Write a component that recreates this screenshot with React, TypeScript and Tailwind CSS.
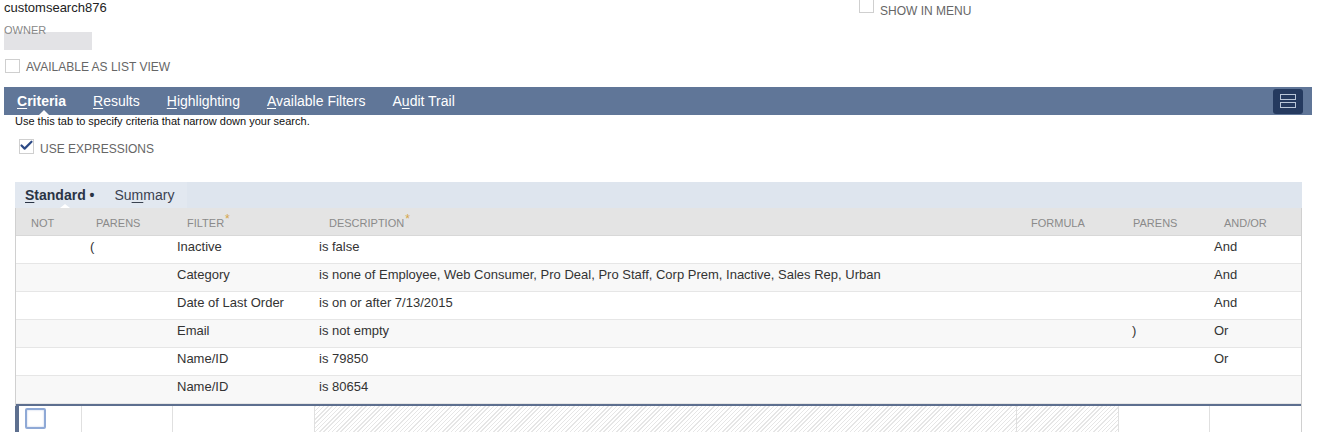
import { Check } from "lucide-react";

const cols = "grid grid-cols-[65px_91px_142px_702px_102px_91px_94px]";

const rows = [
  { parens: "(", filter: "Inactive", desc: "is false", close: "", andor: "And" },
  {
    parens: "",
    filter: "Category",
    desc: "is none of Employee, Web Consumer, Pro Deal, Pro Staff, Corp Prem, Inactive, Sales Rep, Urban",
    close: "",
    andor: "And",
  },
  { parens: "", filter: "Date of Last Order", desc: "is on or after 7/13/2015", close: "", andor: "And" },
  { parens: "", filter: "Email", desc: "is not empty", close: ")", andor: "Or" },
  { parens: "", filter: "Name/ID", desc: "is 79850", close: "", andor: "Or" },
  { parens: "", filter: "Name/ID", desc: "is 80654", close: "", andor: "" },
];

function Box({ className = "" }: { className?: string }) {
  return <span className={`block w-[15px] h-[14px] border border-[#cfcfcf] bg-white ${className}`} />;
}

function Tab({ k, rest, bold }: { k: string; rest: string; bold?: boolean }) {
  return (
    <span className={`text-[14px] text-white ${bold ? "font-bold" : ""}`}>
      <span className="underline underline-offset-2">{k}</span>
      {rest}
    </span>
  );
}

function Star() {
  return <span className="text-[#d5a64a] text-[12px] leading-[12px] relative -top-[4px] ml-[1px]">*</span>;
}

export default function App() {
  const hatch =
    "bg-[repeating-linear-gradient(135deg,#e6e6e6_0px,#e6e6e6_1px,#ffffff_1px,#ffffff_3px)]";

  return (
    <div className="w-[1320px] h-[432px] overflow-hidden bg-white font-['Liberation_Sans',Arial,sans-serif] text-[#333]">
      {/* top fields */}
      <div className="flex">
        <div className="w-[859px] pl-1">
          <div className="text-[13px] leading-[16px] text-[#222]">customsearch876</div>
          <div className="mt-[8px] text-[11px] leading-[12px] text-[#888]">OWNER</div>
          <div className="-mt-[4px] w-[88px] h-[18px] bg-[#e3e3e6]" />
          <div className="mt-[9px] flex items-end gap-[6px] pl-[1px]">
            <Box />
            <span className="text-[12px] leading-[12px] text-[#666]">AVAILABLE AS LIST VIEW</span>
          </div>
        </div>
        <div className="flex items-start gap-[6px]">
          <Box className="-mt-[1px]" />
          <span className="text-[12px] leading-[13px] mt-[5px] text-[#666]">SHOW IN MENU</span>
        </div>
      </div>

      {/* main tabs */}
      <div className="relative mt-[14px] ml-1 w-[1308px] h-[28px] bg-[#607698] flex items-center pl-[13px] pr-[9px]">
        <div className="flex gap-[27px]">
          <Tab k="C" rest="riteria" bold />
          <Tab k="R" rest="esults" />
          <Tab k="H" rest="ighlighting" />
          <Tab k="A" rest="vailable Filters" />
          <span className="text-[14px] text-white">
            A<span className="underline underline-offset-2">u</span>dit Trail
          </span>
        </div>
        <div className="ml-auto w-[30px] h-[25px] rounded-[3px] bg-[#253a5f] flex flex-col items-center justify-center gap-[2px]">
          <span className="block w-[16px] h-[6px] border border-[#b9c6d8]" />
          <span className="block w-[16px] h-[6px] border border-[#b9c6d8]" />
        </div>
        <span className="absolute left-[35px] bottom-0 w-0 h-0 border-l-[5px] border-r-[5px] border-b-[5px] border-l-transparent border-r-transparent border-b-white" />
      </div>

      <div className="pl-[15px] text-[11px] leading-[13px] text-[#111]">
        Use this tab to specify criteria that narrow down your search.
      </div>
      <div className="mt-[11px] pl-[19px] flex items-end gap-[6px]">
        <span className="relative block w-[15px] h-[15px] border border-[#cfcfcf] bg-white">
          <Check className="absolute -left-[1px] -top-[2px] w-[15px] h-[15px] text-[#2d4a86]" strokeWidth={3.5} />
        </span>
        <span className="text-[12px] leading-[12px] text-[#666] translate-y-[1px]">USE EXPRESSIONS</span>
      </div>

      {/* subtabs */}
      <div className="relative mt-[28px] ml-[15px] w-[1287px] h-[26px] bg-[#dee5ee] flex items-center">
        <div className="h-full flex items-center pl-[10px] pr-[13px] bg-[#e2e8f0] gap-[20px]">
          <span className="text-[14px] font-bold text-[#2a3445]">
            <span className="underline underline-offset-2">S</span>tandard •
          </span>
          <span className="text-[14px] text-[#3a4250]">
            Su<span className="underline underline-offset-2">m</span>mary
          </span>
        </div>
        <span className="absolute left-[45px] bottom-0 w-0 h-0 border-l-[5px] border-r-[5px] border-b-[4px] border-l-transparent border-r-transparent border-b-white" />
      </div>

      {/* criteria table */}
      <div className="ml-[15px] w-[1287px] border-l border-r border-[#d0d0d0]">
        <div className={`${cols} h-[28px] items-start pt-[9px] leading-[13px] bg-[#e4e4e4] border-b border-[#d8d8d8] text-[11px] text-[#8a8a8a]`}>
          <span className="pl-[15px]">NOT</span>
          <span className="pl-[15px]">PARENS</span>
          <span className="pl-[15px]">
            FILTER
            <Star />
          </span>
          <span className="pl-[15px]">
            DESCRIPTION
            <Star />
          </span>
          <span className="pl-[15px]">FORMULA</span>
          <span className="pl-[15px]">PARENS</span>
          <span className="pl-[15px]">AND/OR</span>
        </div>
        {rows.map((r, i) => (
          <div
            key={i}
            className={`${cols} h-[28px] items-start pt-[3px] leading-[15px] border-b border-[#e6e6e6] text-[13px] text-[#333] ${
              i % 2 === 0 ? "bg-white" : "bg-[#f8f8f8]"
            }`}
          >
            <span />
            <span className="pl-[9px]">{r.parens}</span>
            <span className="pl-[5px]">{r.filter}</span>
            <span className="pl-[5px]">{r.desc}</span>
            <span />
            <span className="pl-[14px]">{r.close}</span>
            <span className="pl-[5px]">{r.andor}</span>
          </div>
        ))}
        <div className={`${cols} h-[28px] border-t-2 border-[#5d6f8f]`}>
          <div className="flex items-start border-l-4 border-[#5d6f8f] -ml-[1px] pl-[6px] pt-[2px]">
            <span className="block w-[21px] h-[21px] border-2 border-[#8fa9d6] rounded-[2px] bg-white shadow-[inset_0_0_2px_#b7c7e4]" />
          </div>
          <div className="border-l border-[#e0e0e0]" />
          <div className="border-l border-[#e0e0e0]" />
          <div className={`border-l border-[#e0e0e0] ${hatch}`} />
          <div className={`border-l border-[#e0e0e0] ${hatch}`} />
          <div className="border-l border-[#e0e0e0]" />
          <div className="border-l border-[#e0e0e0]" />
        </div>
      </div>
    </div>
  );
}
